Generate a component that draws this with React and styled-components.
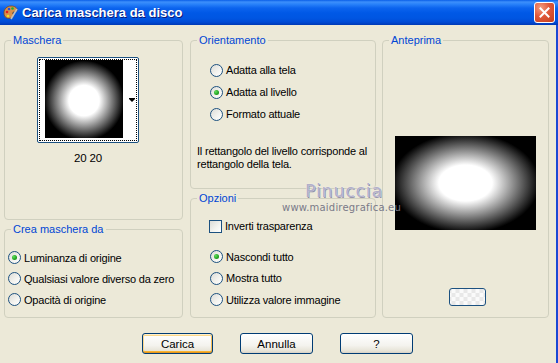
import React from "react";
import styled, { createGlobalStyle } from "styled-components";

const GlobalStyle = createGlobalStyle`
  html, body {
    margin: 0;
    padding: 0;
    background: #ece9d8;
  }
  body {
    font-family: "Liberation Sans", Arial, sans-serif;
    font-size: 11px;
    color: #000;
  }
`;

const Window = styled.div`
  position: relative;
  width: 558px;
  height: 363px;
  display: flex;
  flex-direction: column;
  overflow: hidden;
  background: #ece9d8;
`;

const TitleBar = styled.div`
  height: 25px;
  flex: none;
  display: flex;
  align-items: center;
  padding: 0 2px 0 2px;
  box-sizing: border-box;
  background: linear-gradient(
    to bottom,
    #0a5ee8 0px,
    #3d8ffb 2px,
    #2a83fa 4px,
    #0c64ee 8px,
    #0058e6 13px,
    #0056e2 18px,
    #004bd6 22px,
    #0039b5 25px
  );
`;

const TitleText = styled.span`
  margin-left: 3px;
  color: #fff;
  font-weight: bold;
  font-size: 13px;
  text-shadow: 1px 1px 0 #0a1a7a;
`;

const CloseButton = styled.div`
  margin-left: auto;
  margin-right: 1px;
  width: 21px;
  height: 21px;
  box-sizing: border-box;
  border: 1px solid #fff;
  border-radius: 3px;
  display: flex;
  align-items: center;
  justify-content: center;
  background: radial-gradient(circle at 30% 25%, #f39c7f 0%, #e0583a 45%, #c33f1c 100%);
`;

const Body = styled.div`
  flex: 1;
  display: flex;
  flex-direction: column;
  padding: 9px 0 0 4px;
  border-right: 2px solid #1a47d4;
`;

const Columns = styled.div`
  display: flex;
  align-items: flex-start;
`;

const Column = styled.div`
  width: ${(p) => p.$width}px;
  margin-right: ${(p) => p.$gap || 0}px;
  display: flex;
  flex-direction: column;
  gap: 3px;
`;

const Group = styled.fieldset`
  margin: 0;
  padding: 0;
  min-width: 0;
  height: ${(p) => p.$height}px;
  box-sizing: border-box;
  border: 1px solid #d0d0bf;
  border-radius: 4px;
  display: flex;
  flex-direction: column;
`;

const Legend = styled.legend`
  margin-left: 6px;
  padding: 0 2px;
  line-height: 13px;
  color: #0046d5;
`;

const MaskArea = styled.div`
  padding: 10px 0 0 32px;
  display: flex;
  flex-direction: column;
  align-items: center;
  width: 102px;
`;

const Thumb = styled.div`
  width: 102px;
  height: 86px;
  box-sizing: border-box;
  border: 1px solid #1c5180;
  border-radius: 2px;
  padding: 1px;
  background: #fff;
`;

const Focus = styled.div`
  height: 100%;
  box-sizing: border-box;
  border: 1px dotted #000;
  display: flex;
  align-items: stretch;
`;

const MaskImage = styled.div`
  width: 78px;
  height: 78px;
  margin-left: 5px;
  background: radial-gradient(circle 40px at 50% 52%, #fff 0%, #fff 38%, #000 100%);
`;

const ArrowCell = styled.div`
  flex: 1;
  display: flex;
  align-items: center;
  justify-content: flex-end;
  padding-right: 1px;
`;

const Arrow = styled.div`
  width: 0;
  height: 0;
  border-left: 3px solid transparent;
  border-right: 3px solid transparent;
  border-top: 3px solid #000;
  box-shadow: 0 -1px 0 #000;
`;

const SizeText = styled.div`
  margin-top: 9px;
  line-height: 13px;
  font-size: 11.5px;
  letter-spacing: -0.2px;
`;

const Options = styled.div`
  padding: ${(p) => p.$top}px 0 0 ${(p) => p.$left}px;
  display: flex;
  flex-direction: column;
`;

const Row = styled.div`
  height: ${(p) => p.$h || 22}px;
  display: flex;
  align-items: center;
  gap: 3px;
  font-size: 11px;
  letter-spacing: -0.2px;
  white-space: nowrap;
`;

const Radio = styled.span`
  position: relative;
  width: 13px;
  height: 13px;
  flex: none;
  box-sizing: border-box;
  border: 1px solid #1c5180;
  border-radius: 50%;
  background: linear-gradient(135deg, #dcdcd7 0%, #f4f4f0 60%, #fff 100%);

  &::after {
    content: "";
    display: ${(p) => (p.$checked ? "block" : "none")};
    position: absolute;
    left: 3px;
    top: 3px;
    width: 5px;
    height: 5px;
    border-radius: 50%;
    background: radial-gradient(circle at 35% 35%, #5fe05b 0%, #21a121 60%, #108a10 100%);
  }
`;

const Checkbox = styled.span`
  width: 13px;
  height: 13px;
  flex: none;
  box-sizing: border-box;
  border: 1px solid #1c5180;
  background: linear-gradient(135deg, #dcdcd7 0%, #f4f4f0 60%, #fff 100%);
`;

const Note = styled.div`
  margin: 20px 0 0 6px;
  line-height: 13px;
  font-size: 11px;
  letter-spacing: -0.2px;
  white-space: nowrap;
`;

const PreviewArea = styled.div`
  display: flex;
  flex-direction: column;
  align-items: center;
`;

const Preview = styled.div`
  margin-top: 89px;
  width: 141px;
  height: 94px;
  background: radial-gradient(ellipse 74px 50px at 50% 50%, #fff 0%, #fff 36%, #000 100%);
`;

const SmallButton = styled.div`
  margin: 58px 0 0 4px;
  width: 37px;
  height: 18px;
  box-sizing: border-box;
  border: 1px solid #1c5180;
  border-radius: 3px;
  background:
    repeating-conic-gradient(#e8e8e8 0 25%, #fafafa 0 50%) 50% 50% / 8px 8px,
    #fff;
`;

const ButtonRow = styled.div`
  margin-top: 15px;
  padding-left: 138px;
  display: flex;
  gap: 27px;
`;

const Button = styled.div`
  width: ${(p) => p.$width}px;
  height: 21px;
  box-sizing: border-box;
  border: 1px solid #003c74;
  border-radius: 3px;
  display: flex;
  align-items: center;
  justify-content: center;
  font-size: 11.5px;
  background: linear-gradient(to bottom, #fff 0%, #f4f3ee 60%, #e6e3d6 90%, #d6d0c5 100%);
  box-shadow: ${(p) =>
    p.$default
      ? "inset 0 1px 0 #ffefcb, inset 0 -1px 0 #e5971f, inset 1px 0 0 #fbd88e, inset -1px 0 0 #f5bc55, inset 0 2px 0 #fcd889, inset 0 -2px 0 #f8b330"
      : "none"};
`;

const Watermark = styled.div`
  position: absolute;
  left: 282px;
  top: 181px;
  display: flex;
  flex-direction: column;
  align-items: flex-end;
  pointer-events: none;
`;

const WatermarkName = styled.div`
  font-family: "DejaVu Sans", sans-serif;
  font-size: 17px;
  letter-spacing: 1px;
  color: #b2afc8;
  text-shadow: 0 0 1px #ffffff, 1px 1px 0 #8e8ba4;
  margin-right: 18px;
`;

const WatermarkUrl = styled.div`
  font-family: "DejaVu Sans", sans-serif;
  font-size: 10px;
  letter-spacing: 0.2px;
  color: #7a7a88;
  margin-top: 1px;
`;

const PaletteIcon = () => (
  <svg width="17" height="17" viewBox="0 0 17 17">
    <path d="M2 9c0-4 3-7 7-7s6 2 6 4-2 2-3 2-2 1-1 2 1 3-2 4-7 0-7-5z" fill="#d9904a" stroke="#7a4a1a" strokeWidth="0.8" />
    <circle cx="5" cy="8" r="1.3" fill="#e02020" />
    <circle cx="7" cy="5" r="1.3" fill="#2050e0" />
    <circle cx="10.5" cy="4.5" r="1.3" fill="#20b030" />
    <circle cx="6" cy="12" r="1.3" fill="#f0e020" />
    <path d="M9 15l6-10" stroke="#c0c0c0" strokeWidth="1.6" />
  </svg>
);

const CloseIcon = () => (
  <svg width="11" height="11" viewBox="0 0 11 11">
    <path d="M1.5 1.5l8 8M9.5 1.5l-8 8" stroke="#fff" strokeWidth="2" strokeLinecap="square" />
  </svg>
);

export default function App() {
  return (
    <>
      <GlobalStyle />
      <Window>
        <TitleBar>
          <PaletteIcon />
          <TitleText>Carica maschera da disco</TitleText>
          <CloseButton>
            <CloseIcon />
          </CloseButton>
        </TitleBar>
        <Body>
          <Columns>
            <Column $width={179} $gap={7}>
              <Group $height={186}>
                <Legend>Maschera</Legend>
                <MaskArea>
                  <Thumb>
                    <Focus>
                      <MaskImage />
                      <ArrowCell>
                        <Arrow />
                      </ArrowCell>
                    </Focus>
                  </Thumb>
                  <SizeText>20 20</SizeText>
                </MaskArea>
              </Group>
              <Group $height={95}>
                <Legend>Crea maschera da</Legend>
                <Options $top={11} $left={3}>
                  <Row $h={21}>
                    <Radio $checked />
                    Luminanza di origine
                  </Row>
                  <Row $h={21}>
                    <Radio />
                    Qualsiasi valore diverso da zero
                  </Row>
                  <Row $h={21}>
                    <Radio />
                    Opacità di origine
                  </Row>
                </Options>
              </Group>
            </Column>
            <Column $width={186} $gap={6}>
              <Group $height={155}>
                <Legend>Orientamento</Legend>
                <Options $top={12} $left={19}>
                  <Row>
                    <Radio />
                    Adatta alla tela
                  </Row>
                  <Row>
                    <Radio $checked />
                    Adatta al livello
                  </Row>
                  <Row>
                    <Radio />
                    Formato attuale
                  </Row>
                </Options>
                <Note>
                  Il rettangolo del livello corrisponde al
                  <br />
                  rettangolo della tela.
                </Note>
              </Group>
              <Group $height={126}>
                <Legend>Opzioni</Legend>
                <Options $top={10} $left={18}>
                  <Row>
                    <Checkbox />
                    Inverti trasparenza
                  </Row>
                </Options>
                <Options $top={9} $left={19}>
                  <Row $h={21.5}>
                    <Radio $checked />
                    Nascondi tutto
                  </Row>
                  <Row $h={21.5}>
                    <Radio />
                    Mostra tutto
                  </Row>
                  <Row $h={21.5}>
                    <Radio />
                    Utilizza valore immagine
                  </Row>
                </Options>
              </Group>
            </Column>
            <Column $width={167}>
              <Group $height={284}>
                <Legend>Anteprima</Legend>
                <PreviewArea>
                  <Preview />
                  <SmallButton />
                </PreviewArea>
              </Group>
            </Column>
          </Columns>
          <ButtonRow>
            <Button $width={71} $default>
              Carica
            </Button>
            <Button $width={73}>Annulla</Button>
            <Button $width={73}>?</Button>
          </ButtonRow>
        </Body>
        <Watermark>
          <WatermarkName>Pinuccia</WatermarkName>
          <WatermarkUrl>www.maidiregrafica.eu</WatermarkUrl>
        </Watermark>
      </Window>
    </>
  );
}
